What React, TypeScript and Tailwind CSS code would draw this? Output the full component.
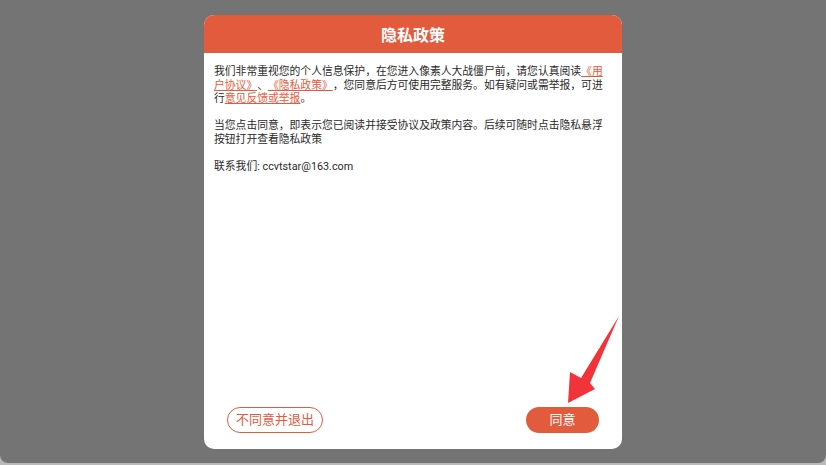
const font = { fontFamily: 'Roboto, "Noto Sans CJK SC", sans-serif' }

function Arrow() {
  return (
    <svg className="absolute left-0 top-0 pointer-events-none" width="418" height="434" viewBox="0 0 418 434">
      <polygon points="415,301 386,368 391,374 364,388 366,357 377,363" fill="#f2343a" />
    </svg>
  )
}

export default function App() {
  return (
    <div className="w-[826px] h-[465px] bg-[#b9b9b9]" style={font}>
      <div className="h-[463px] bg-[#747474] rounded-b-[8px] flex justify-center pt-[15px]">
        <div className="relative w-[418px] h-[434px] bg-white rounded-[10px] overflow-hidden flex flex-col">
          <div className="h-[38px] pt-[3px] bg-[#e35b3d] flex items-center justify-center text-white text-[16px] font-bold">
            隐私政策
          </div>
          <div className="flex-1 pl-[10px] pr-[12px] pt-[12px] text-[10.8px] leading-[13.6px] text-[#2a2a2a] [text-spacing-trim:space-all]">
            <p>
              我们非常重视您的个人信息保护，在您进入像素人大战僵尸前，请您认真阅读
              <span className="text-[#e35b3d] underline">《用户协议》</span>、
              <span className="text-[#e35b3d] underline">《隐私政策》</span>
              ，您同意后方可使用完整服务。如有疑问或需举报，可进行
              <span className="text-[#e35b3d] underline">意见反馈或举报</span>。
            </p>
            <p className="mt-[13.6px]">
              当您点击同意，即表示您已阅读并接受协议及政策内容。后续可随时点击隐私悬浮按钮打开查看隐私政策
            </p>
            <p className="mt-[13.6px]">联系我们: ccvtstar@163.com</p>
          </div>
          <div className="flex justify-between items-center px-[23px] pb-[16px]">
            <button className="w-[96px] h-[26px] rounded-full border border-[#e35b3d] text-[#e35b3d] text-[13px] flex items-center justify-center">
              不同意并退出
            </button>
            <button className="w-[73px] h-[26px] rounded-full bg-[#e35b3d] text-white text-[13px] flex items-center justify-center">
              同意
            </button>
          </div>
          <Arrow />
        </div>
      </div>
    </div>
  )
}
